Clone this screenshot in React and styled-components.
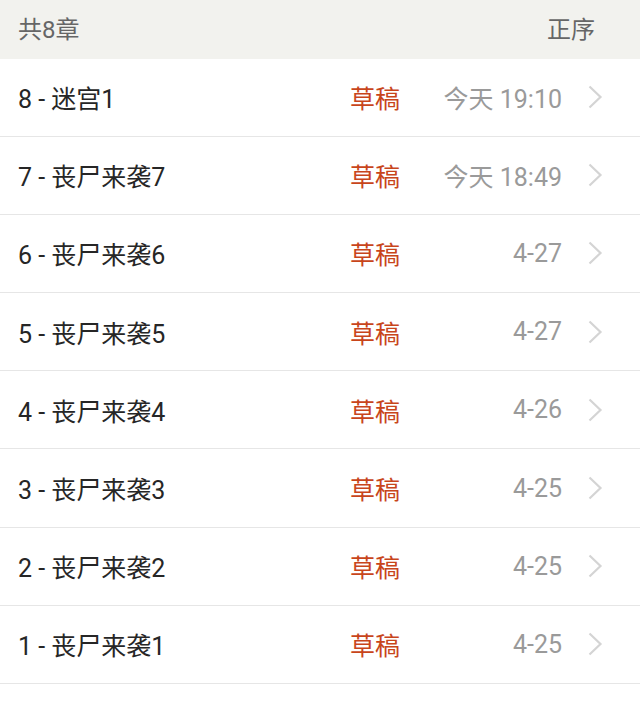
import React from 'react';
import styled, { createGlobalStyle } from 'styled-components';

const GlobalStyle = createGlobalStyle`
    html, body {
        margin: 0;
        padding: 0;
        background: #ffffff;
        font-family: Roboto, "Noto Sans CJK SC", sans-serif;
    }
`

const Page = styled.div`
    width: 640px;
    height: 702px;
    overflow: hidden;
    background: #ffffff;
`

const Header = styled.header`
    height: 58.5px;
    box-sizing: border-box;
    display: flex;
    align-items: center;
    justify-content: space-between;
    padding: 0 45px 4px 18px;
    background: #f2f2ee;
    color: #666666;
    font-size: 24px;
`

const List = styled.ul`
    margin: 0;
    padding: 0;
    list-style: none;
`

const Row = styled.li`
    height: 77.2px;
    display: flex;
    align-items: center;
    padding: 0 37px 0 18px;
    border-bottom: 1px solid #e6e6e6;
    font-size: 25px;
`

const Title = styled.span`
    flex: 1;
    color: #262626;
`

const Status = styled.span`
    color: #c8451b;
`

const Time = styled.span`
    width: 162px;
    text-align: right;
    color: #9a9a9a;
`

const Chevron = styled.svg`
    width: 16px;
    height: 24px;
    margin-left: 25px;
    flex-shrink: 0;
`

const chapters = [
    { title: '8 - 迷宫1', time: '今天 19:10' },
    { title: '7 - 丧尸来袭7', time: '今天 18:49' },
    { title: '6 - 丧尸来袭6', time: '4-27' },
    { title: '5 - 丧尸来袭5', time: '4-27' },
    { title: '4 - 丧尸来袭4', time: '4-26' },
    { title: '3 - 丧尸来袭3', time: '4-25' },
    { title: '2 - 丧尸来袭2', time: '4-25' },
    { title: '1 - 丧尸来袭1', time: '4-25' },
]

function App() {
    return (
        <Page>
            <GlobalStyle />
            <Header>
                <span>共8章</span>
                <span>正序</span>
            </Header>
            <List>
                {chapters.map(c => (
                    <Row key={c.title}>
                        <Title>{c.title}</Title>
                        <Status>草稿</Status>
                        <Time>{c.time}</Time>
                        <Chevron viewBox="0 0 16 24">
                            <path d="M2.5 1.5 L13.5 12 L2.5 22.5" fill="none" stroke="#d4d4d4" strokeWidth="2.2" />
                        </Chevron>
                    </Row>
                ))}
            </List>
        </Page>
    );
}

export default App;
